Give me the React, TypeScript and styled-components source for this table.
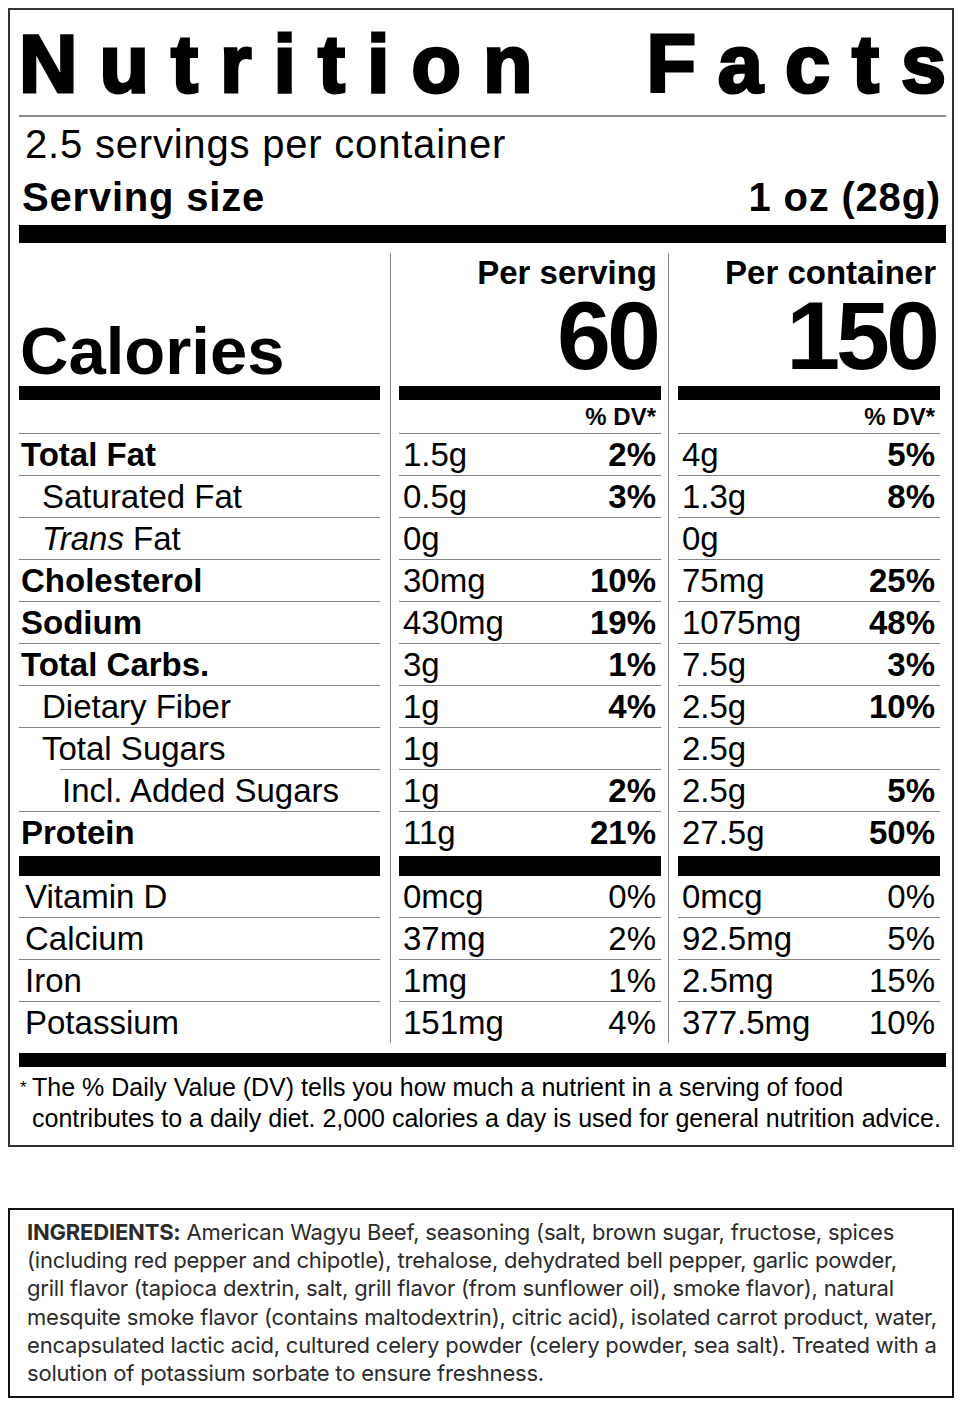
import React from 'react';
import styled, { createGlobalStyle } from 'styled-components';

const GlobalStyle = createGlobalStyle`
  body {
    margin: 0;
    background: #fff;
    color: #000;
    font-family: "Liberation Sans", Arial, sans-serif;
  }
`;

const Label = styled.section`
  margin: 8px 9px 0 8px;
  border: 2px solid #333;
  padding: 14px 6px 12px 9px;
`;

const Title = styled.h1`
  display: flex;
  justify-content: space-between;
  margin: 0 0 10px;
  font-size: 81px;
  line-height: 81px;
  font-weight: 700;
  letter-spacing: 22px;
  -webkit-text-stroke: 3px #000;
`;

const LastLetter = styled.span`
  letter-spacing: 0;
`;

const Bar = styled.div<{ $h: number; $color?: string; $top?: number }>`
  height: ${({ $h }) => $h}px;
  margin-top: ${({ $top }) => $top || 0}px;
  background: ${({ $color }) => $color || '#000'};
`;

const Servings = styled.div`
  margin-top: 5px;
  padding-left: 6px;
  font-size: 40px;
  line-height: 44px;
  letter-spacing: 0.8px;
`;

const ServingSize = styled.div`
  display: flex;
  justify-content: space-between;
  margin: 9px 0 6px;
  padding: 0 5px 0 3px;
  font-size: 40px;
  line-height: 44px;
  font-weight: 700;
  letter-spacing: 0.8px;
`;

const Columns = styled.div`
  display: flex;
  margin-top: 10px;
`;

const Column = styled.div<{ $ml?: number; $pl?: number }>`
  width: ${({ $ml }) => ($ml ? 262 : 361)}px;
  margin-left: ${({ $ml }) => $ml || 0}px;
  padding-left: ${({ $pl }) => $pl || 0}px;
  border-left: ${({ $ml }) => ($ml ? '1px solid #858585' : 'none')};
`;

const Header = styled.div<{ $bottom?: boolean }>`
  height: 133px;
  display: flex;
  flex-direction: column;
  justify-content: ${({ $bottom }) => ($bottom ? 'flex-end' : 'flex-start')};
  align-items: ${({ $bottom }) => ($bottom ? 'flex-start' : 'flex-end')};
  padding-top: ${({ $bottom }) => ($bottom ? 0 : 2)}px;
  box-sizing: border-box;
`;

const Calories = styled.div`
  font-size: 67px;
  line-height: 66px;
  font-weight: 700;
  padding: 0 0 2px 1px;
`;

const PerLabel = styled.div`
  font-size: 33px;
  line-height: 36px;
  font-weight: 700;
  padding-right: 4px;
`;

const BigNumber = styled.div`
  font-size: 97px;
  line-height: 90px;
  font-weight: 700;
  letter-spacing: -4px;
  margin-right: 4px;
`;

const Row = styled.div<{ $h?: number; $rule?: 'full' | 'inset' | 'none'; $indent?: number }>`
  box-sizing: border-box;
  height: ${({ $h }) => $h || 42}px;
  display: flex;
  justify-content: space-between;
  align-items: flex-start;
  padding: 0 5px 0 ${({ $indent }) => $indent ?? 4}px;
  font-size: 33px;
  line-height: 41px;
  white-space: nowrap;
  background: ${({ $rule }) => ($rule === 'none' ? 'none' : 'linear-gradient(#858585, #858585)')};
  background-repeat: no-repeat;
  background-position: right bottom;
  background-size: ${({ $rule }) => ($rule === 'inset' ? 'calc(100% - 41px)' : '100%')} 1px;
`;

const DvRow = styled(Row)`
  justify-content: flex-end;
  font-size: 24px;
  line-height: 33px;
  font-weight: 700;
`;

const Name = styled.span<{ $bold?: boolean }>`
  font-weight: ${({ $bold }) => ($bold ? 700 : 400)};
`;

const Dv = styled.span<{ $bold?: boolean }>`
  font-weight: ${({ $bold }) => ($bold ? 700 : 400)};
`;

const Footnote = styled.p`
  margin: 5px 0 0;
  padding-left: 13px;
  text-indent: -12px;
  font-size: 25px;
  line-height: 30px;
`;

const Star = styled.span`
  display: inline-block;
  width: 12px;
  text-indent: 0;
  font-size: 17px;
  vertical-align: 3px;
`;

const Ingredients = styled.section`
  margin: 61px 9px 0 8px;
  border: 2px solid #111;
  padding: 8px 10px 9px 17px;
  font-family: Inter, "Liberation Sans", sans-serif;
  font-size: 22px;
  line-height: 28.2px;
  letter-spacing: -0.2px;
  color: #2b2b2b;

  strong {
    font-weight: 700;
  }
`;

type Nutrient = {
  name: React.ReactNode;
  indent: number;
  bold?: boolean;
  rule?: 'full' | 'inset' | 'none';
  h?: number;
  serving: [string, string?];
  container: [string, string?];
};

const nutrients: Nutrient[] = [
  { name: 'Total Fat', indent: 2, bold: true, serving: ['1.5g', '2%'], container: ['4g', '5%'] },
  { name: 'Saturated Fat', indent: 23, serving: ['0.5g', '3%'], container: ['1.3g', '8%'] },
  { name: <><i>Trans</i> Fat</>, indent: 23, serving: ['0g'], container: ['0g'] },
  { name: 'Cholesterol', indent: 2, bold: true, serving: ['30mg', '10%'], container: ['75mg', '25%'] },
  { name: 'Sodium', indent: 2, bold: true, serving: ['430mg', '19%'], container: ['1075mg', '48%'] },
  { name: 'Total Carbs.', indent: 2, bold: true, serving: ['3g', '1%'], container: ['7.5g', '3%'] },
  { name: 'Dietary Fiber', indent: 23, serving: ['1g', '4%'], container: ['2.5g', '10%'] },
  { name: 'Total Sugars', indent: 23, rule: 'inset', serving: ['1g'], container: ['2.5g'] },
  { name: 'Incl. Added Sugars', indent: 43, serving: ['1g', '2%'], container: ['2.5g', '5%'] },
  { name: 'Protein', indent: 2, bold: true, rule: 'none', h: 44, serving: ['11g', '21%'], container: ['27.5g', '50%'] },
];

const vitamins: Nutrient[] = [
  { name: 'Vitamin D', indent: 6, serving: ['0mcg', '0%'], container: ['0mcg', '0%'] },
  { name: 'Calcium', indent: 6, serving: ['37mg', '2%'], container: ['92.5mg', '5%'] },
  { name: 'Iron', indent: 6, serving: ['1mg', '1%'], container: ['2.5mg', '15%'] },
  { name: 'Potassium', indent: 6, rule: 'none', h: 41, serving: ['151mg', '4%'], container: ['377.5mg', '10%'] },
];

const ValueColumn = (props: {
  label: string;
  calories: string;
  pick: (n: Nutrient) => [string, string?];
  ml: number;
  pl: number;
}) => (
  <Column $ml={props.ml} $pl={props.pl}>
    <Header>
      <PerLabel>{props.label}</PerLabel>
      <BigNumber>{props.calories}</BigNumber>
    </Header>
    <Bar $h={14} />
    <DvRow $h={34}>% DV*</DvRow>
    {nutrients.map((n, i) => {
      const [amount, dv] = props.pick(n);
      return (
        <Row key={i} $h={n.h} $rule={n.rule === 'none' ? 'none' : 'full'} $indent={4}>
          <span>{amount}</span>
          <Dv $bold>{dv}</Dv>
        </Row>
      );
    })}
    <Bar $h={20} />
    {vitamins.map((n, i) => {
      const [amount, dv] = props.pick(n);
      return (
        <Row key={i} $h={n.h} $rule={n.rule} $indent={4}>
          <span>{amount}</span>
          <Dv>{dv}</Dv>
        </Row>
      );
    })}
  </Column>
);

export default function App() {
  return (
    <>
      <GlobalStyle />
      <Label>
        <Title>
          <span>Nutrition</span>
          <span>
            Fact<LastLetter>s</LastLetter>
          </span>
        </Title>
        <Bar $h={2} $color="#8a8a8a" />
        <Servings>2.5 servings per container</Servings>
        <ServingSize>
          <span>Serving size</span>
          <span>1 oz (28g)</span>
        </ServingSize>
        <Bar $h={18} />

        <Columns>
          <Column>
            <Header $bottom>
              <Calories>Calories</Calories>
            </Header>
            <Bar $h={14} />
            <DvRow $h={34} />
            {nutrients.map((n, i) => (
              <Row key={i} $h={n.h} $rule={n.rule} $indent={n.indent}>
                <Name $bold={n.bold}>{n.name}</Name>
              </Row>
            ))}
            <Bar $h={20} />
            {vitamins.map((n, i) => (
              <Row key={i} $h={n.h} $rule={n.rule} $indent={n.indent}>
                <Name>{n.name}</Name>
              </Row>
            ))}
          </Column>
          <ValueColumn label="Per serving" calories="60" pick={(n) => n.serving} ml={10} pl={8} />
          <ValueColumn label="Per container" calories="150" pick={(n) => n.container} ml={7} pl={9} />
        </Columns>

        <Bar $h={14} $top={10} />
        <Footnote>
          <Star>*</Star>The % Daily Value (DV) tells you how much a nutrient in a serving of food
          contributes to a daily diet. 2,000 calories a day is used for general nutrition advice.
        </Footnote>
      </Label>

      <Ingredients>
        <strong>INGREDIENTS:</strong> American Wagyu Beef, seasoning (salt, brown sugar, fructose, spices
        <br />
        (including red pepper and chipotle), trehalose, dehydrated bell pepper, garlic powder,
        <br />
        grill flavor (tapioca dextrin, salt, grill flavor (from sunflower oil), smoke flavor), natural
        <br />
        mesquite smoke flavor (contains maltodextrin), citric acid), isolated carrot product, water,
        <br />
        encapsulated lactic acid, cultured celery powder (celery powder, sea salt). Treated with a
        <br />
        solution of potassium sorbate to ensure freshness.
      </Ingredients>
    </>
  );
}
